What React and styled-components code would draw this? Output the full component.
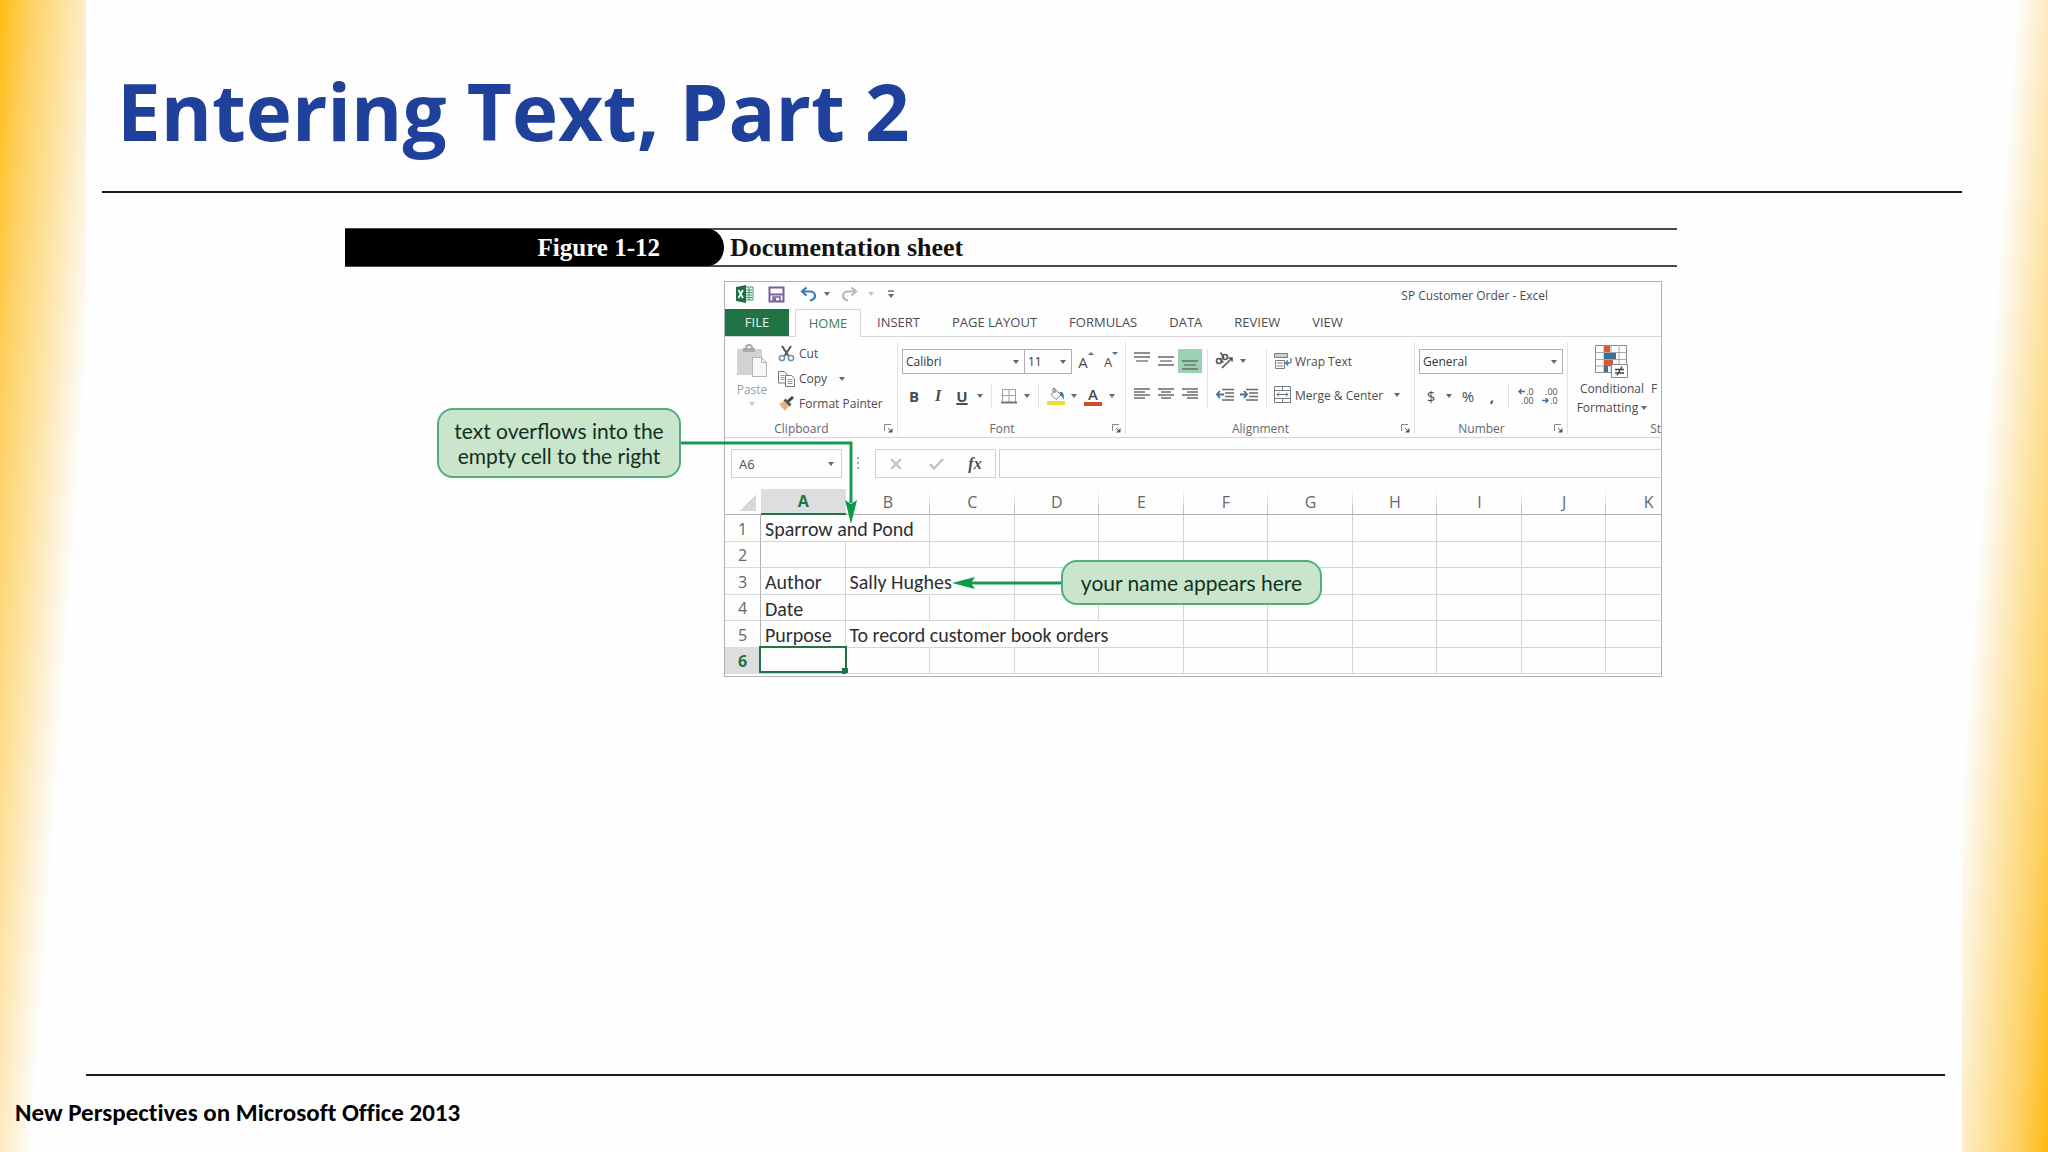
import React, { useState } from "react";
import styled, { createGlobalStyle } from "styled-components";

const GlobalStyle = createGlobalStyle`
  * {
    box-sizing: border-box;
  }
  body {
    margin: 0;
    background: #fefefe;
    font-family: "Open Sans", "Noto Sans", sans-serif;
  }
  button, input, select {
    font: inherit;
    color: inherit;
  }
`;

const Slide = styled.div`
  display: flex;
  flex-direction: column;
  min-height: 100vh;
  background:
    linear-gradient(94deg, #ffbd12 0, #fed062 30px, #fde3a0 65px, #fdefd2 90px, #fefefe 112px) left top / 86px 100% no-repeat,
    linear-gradient(274deg, #ffb910 0, #fed062 30px, #fde3a0 65px, #fdefd2 90px, #fefefe 112px) right top / 86px 100% no-repeat,
    #fefefe;
`;

const Header = styled.header`
  margin: 0 86px 0 102px;
  padding: 58px 0 27px 15px;
  border-bottom: 2px solid #1c1c1c;
`;

const Title = styled.h1`
  margin: 0;
  font-size: 78px;
  line-height: 106px;
  font-weight: 700;
  color: #1f419b;
`;

const Footer = styled.footer`
  margin-top: auto;
  padding-bottom: 24px;
`;

const FooterRule = styled.hr`
  margin: 0 103px 22px 86px;
  border: 0;
  border-top: 2px solid #1c1c1c;
`;

const FooterText = styled.p`
  margin: 0;
  padding-left: 15px;
  font-family: Carlito, Lato, sans-serif;
  font-size: 25px;
  font-variant-ligatures: none;
  line-height: 30px;
  font-weight: 700;
  color: #000;
`;

const Figure = styled.figure`
  margin: 35px 371px 0 345px;
`;

const Caption = styled.figcaption`
  display: flex;
  height: 39px;
  border-top: 2px solid #4a4a4c;
  border-bottom: 2px solid #4a4a4c;
  font-family: "Liberation Serif", serif;
  font-size: 26px;
  line-height: 35px;
  font-weight: 700;
  color: #111;
`;

const CaptionNumber = styled.span`
  flex: none;
  width: 379px;
  margin: -1px 6px -1px 0;
  padding: 1px 64px 0 0;
  border-radius: 0 16px 16px 0 / 0 50% 50% 0;
  background: #000;
  font-size: 25px;
  color: #fff;
  text-align: right;
`;

const Window = styled.div`
  position: relative;
  margin: 14px 15px 0 379px;
  border: 1px solid #b2b2b6;
  background: #fefefe;
  font-size: 12px;
  color: #4c4c50;
`;

const TitleBar = styled.div`
  display: flex;
  align-items: center;
  justify-content: space-between;
  height: 27px;
  padding: 0 113px 0 8px;
`;

const QuickAccess = styled.div`
  display: flex;
  align-items: center;
  align-self: flex-start;
`;

const ToolButton = styled.button`
  display: inline-flex;
  align-items: center;
  justify-content: center;
  flex: none;
  width: ${(props) => props.$width || 24}px;
  height: 24px;
  padding: 0;
  border: 0;
  background: ${(props) => (props.$active ? "#9bd2b4" : "transparent")};
  font-size: 15px;
  line-height: 24px;
  font-weight: ${(props) => (props.$bold ? 700 : 400)};
`;

const Caret = styled.span`
  flex: none;
  border: 3px solid transparent;
  border-top: 4px solid ${(props) => (props.$faint ? "#c4c4c8" : "#66666a")};
  border-bottom: 0;
`;

const Tabs = styled.nav`
  display: flex;
  height: 28px;
  border-bottom: 1px solid #d8d8dc;
  font-size: 13px;
`;

const Tab = styled.button`
  flex: none;
  height: 27px;
  padding: 0 16px;
  border: 0;
  background: transparent;
  line-height: 27px;
`;

const FileTab = styled(Tab)`
  width: 64px;
  margin-right: 6px;
  padding: 0;
  background: #217346;
  color: #e6f3ea;
`;

const HomeTab = styled(Tab)`
  width: 66px;
  height: 28px;
  padding: 0;
  border: 1px solid #d8d8dc;
  border-bottom: 0;
  background: #fefefe;
  color: #3c7d5a;
`;

const Ribbon = styled.div`
  display: flex;
  height: 101px;
  overflow: hidden;
  border-bottom: 1px solid #d4d4d8;
`;

const Group = styled.section`
  display: flex;
  flex-direction: column;
  flex: none;
  width: ${(props) => props.$width}px;
  padding: ${(props) => props.$top || 12}px 4px 0;
  background: linear-gradient(#e2e2e6, #e2e2e6) right 5px / 1px 92px no-repeat;
`;

const GroupFooter = styled.div`
  display: flex;
  align-items: center;
  height: 18px;
  margin-top: auto;
  color: #66666a;
`;

const GroupName = styled.span`
  flex: 1;
  padding-right: 10px;
  text-align: center;
`;

const Launcher = styled.button`
  display: flex;
  width: 10px;
  padding: 0;
  border: 0;
  background: transparent;
`;

const Row = styled.div`
  display: flex;
  align-items: ${(props) => props.$align || "center"};
`;

const Stack = styled.div`
  display: flex;
  flex-direction: column;
  gap: 10px;
`;

const Divider = styled.span`
  align-self: stretch;
  width: 1px;
  margin: 0 5px;
  background: #e2e2e6;
`;

const Field = styled.label`
  display: flex;
  align-items: center;
  flex: none;
  width: ${(props) => props.$width}px;
  height: 25px;
  padding-right: 5px;
  border: 1px solid #b0b0b4;
  & + & {
    border-left: 0;
  }
`;

const Select = styled.select`
  flex: 1;
  min-width: 0;
  height: 22px;
  padding: 0 0 0 3px;
  border: 0;
  outline: 0;
  appearance: none;
  background: transparent;
  color: #333337;
`;

const PasteButton = styled.button`
  display: flex;
  flex-direction: column;
  align-items: center;
  width: 44px;
  padding: 3px 0 0 2px;
  border: 0;
  background: transparent;
  line-height: 24px;
  color: #9c9ca0;
`;

const ClipboardItem = styled.button`
  display: flex;
  align-items: center;
  gap: 4px;
  height: 25px;
  padding: 0 0 0 5px;
  border: 0;
  background: transparent;
`;

const CellButton = styled.button`
  display: flex;
  align-items: center;
  gap: 3px;
  height: 24px;
  padding: 0 0 0 2px;
  border: 0;
  background: transparent;
  white-space: nowrap;
`;

const SpacedCaret = styled(Caret)`
  margin-left: 8px;
`;

const StyleButton = styled.button`
  display: flex;
  flex-direction: column;
  align-items: center;
  flex: none;
  gap: 1px;
  width: 78px;
  padding: 0;
  border: 0;
  background: transparent;
  line-height: 18px;
`;

const CutOffLabel = styled.span`
  padding-top: 35px;
  line-height: 18px;
`;

const CutOffName = styled.span`
  margin-left: auto;
`;

const StylesGroup = styled.section`
  display: flex;
  flex-direction: column;
  flex: 1;
  min-width: 0;
  padding: 8px 0 0 5px;
`;

const FormulaBar = styled.div`
  display: flex;
  height: 51px;
  padding: 11px 0 11px 6px;
`;

const NameBox = styled.label`
  display: flex;
  align-items: center;
  width: 111px;
  padding: 0 7px;
  border: 1px solid #cfcfd3;
`;

const BoxInput = styled.input`
  flex: 1;
  min-width: 0;
  padding: 0;
  border: 0;
  outline: 0;
  background: transparent;
  font-size: 13px;
`;

const Grip = styled.span`
  width: 2px;
  margin: 8px 16px 8px 15px;
  background: repeating-linear-gradient(#a8a8ac 0 2px, transparent 2px 5px);
`;

const EntryButtons = styled.div`
  display: flex;
  align-items: center;
  width: 121px;
  border: 1px solid #cfcfd3;
`;

const FormulaInput = styled.input`
  flex: 1;
  min-width: 0;
  margin-left: 3px;
  border: 1px solid #cfcfd3;
  border-right: 0;
  outline: 0;
  background: transparent;
`;

const SheetClip = styled.div`
  overflow: hidden;
  padding-bottom: 2px;
`;

const Sheet = styled.table`
  width: calc(100% + 30px);
  table-layout: fixed;
  border-collapse: separate;
  border-spacing: 0;
  font-family: Carlito, Lato, sans-serif;
  font-size: 20px;
  line-height: 22px;
`;

const Corner = styled.th`
  width: 36px;
  height: 26px;
  padding: 0;
  border-bottom: 1px solid #b0b0b4;
  background: linear-gradient(135deg, transparent 50%, #d8d8dc 50%) 14px 5px / 17px 17px no-repeat;
`;

const ColumnHead = styled.th`
  height: 26px;
  padding: 0;
  border-bottom: ${(props) => (props.$selected ? "2px solid #217346" : "1px solid #b0b0b4")};
  background: ${(props) =>
    props.$selected
      ? "#dedee0"
      : "linear-gradient(transparent, #b8b8bc) right top / 1px 100% no-repeat"};
  font-family: "Open Sans", sans-serif;
  font-size: 16px;
  font-weight: ${(props) => (props.$selected ? 700 : 400)};
  color: ${(props) => (props.$selected ? "#217346" : "#66666a")};
`;

const SheetRow = styled.tr`
  height: 27px;
  &:nth-child(even) {
    height: 26px;
  }
`;

const RowHead = styled.th`
  padding: 1px 0 0;
  border-right: 1px solid #b0b0b4;
  border-bottom: 1px solid #dcdce0;
  background: ${(props) => (props.$selected ? "#dedee0" : "transparent")};
  font-family: "Open Sans", sans-serif;
  font-size: 16px;
  font-weight: ${(props) => (props.$selected ? 700 : 400)};
  color: ${(props) => (props.$selected ? "#217346" : "#66666a")};
`;

const Cell = styled.td`
  position: relative;
  padding: 2px 0 0 4px;
  border-right: 1px solid ${(props) => (props.$open ? "transparent" : "#d4d4d8")};
  border-bottom: 1px solid #d4d4d8;
  white-space: nowrap;
  color: #2e2e30;
`;

const ActiveFrame = styled.span`
  position: absolute;
  inset: -2px -2px 0 -2px;
  border: 2px solid #217346;
  &::after {
    content: "";
    position: absolute;
    right: -3px;
    bottom: -3px;
    width: 6px;
    height: 6px;
    background: #217346;
  }
`;

const Callout = styled.div`
  position: absolute;
  left: ${(props) => props.$left}px;
  top: ${(props) => props.$top}px;
  width: ${(props) => props.$width}px;
  padding: 8px 0;
  border: 2px solid #4fae7c;
  border-radius: 16px;
  background: #c9e5cb;
  font-family: Lato, sans-serif;
  font-size: 21px;
  line-height: 25px;
  text-align: center;
  white-space: nowrap;
  color: #12301c;
`;

const Arrows = styled.svg`
  position: absolute;
  left: -46px;
  top: 157px;
`;

const NameArrow = styled.svg`
  position: absolute;
  left: 227px;
  top: 294px;
`;

function ExcelLogo() {
  return (
    <svg width="20" height="20" viewBox="0 0 20 20">
      <path d="M10 3h8v13h-8z" fill="#e9f4ed" stroke="#4b9a6c" />
      <path d="M11 6h6M11 8.500h6M11 11h6M11 13.500h6M14 4v12" stroke="#4b9a6c" />
      <path d="M1 3l10-2v18L1 17z" fill="#1e7145" />
      <path d="M3.500 6l4.500 8M8 6l-4.500 8" stroke="#fff" strokeWidth="1.700" />
    </svg>
  );
}

function SaveIcon() {
  return (
    <svg width="17" height="17" viewBox="0 0 17 17" fill="none">
      <path d="M1.500 1.500h14v14h-14z" stroke="#7a5c9c" strokeWidth="2" />
      <path d="M2 8.500h13" stroke="#7a5c9c" strokeWidth="2" />
      <path d="M5 15v-4h7v4" stroke="#7a5c9c" strokeWidth="1.500" />
      <path d="M6 12h2v3H6z" fill="#7a5c9c" />
    </svg>
  );
}

function UndoIcon({ color, flip }) {
  return (
    <svg width="17" height="17" viewBox="0 0 17 17" fill="none" stroke={color} strokeWidth="2.200">
      <g transform={flip ? "matrix(-1 0 0 1 17 0)" : undefined}>
        <path d="M6.500 1.500L2 5.500l4.500 4" />
        <path d="M2 5.500h8c3 0 5 1.800 5 4.300s-2 4.200-5 4.700" />
      </g>
    </svg>
  );
}

function CustomizeIcon() {
  return (
    <svg width="8" height="9" viewBox="0 0 8 9">
      <path d="M1 1h6" stroke="#66666a" strokeWidth="1.400" />
      <path d="M1 4h6L4 8z" fill="#66666a" />
    </svg>
  );
}

function PasteIcon() {
  return (
    <svg width="32" height="34" viewBox="0 0 32 34">
      <path d="M1 5h25v26H1z" fill="#d3d3d6" />
      <path d="M7 4h12v4H7z" fill="#a9a9ad" />
      <path d="M10 4a3 3 0 0 1 6 0" fill="none" stroke="#a9a9ad" strokeWidth="2" />
      <path d="M16.500 13.500h9l5 5v14h-14z" fill="#f7f7f8" stroke="#b4b4b8" />
      <path d="M25.500 13.500v5h5" fill="none" stroke="#b4b4b8" />
    </svg>
  );
}

function CutIcon() {
  return (
    <svg width="17" height="17" viewBox="0 0 17 17" fill="none">
      <path d="M4 1l6.500 10M13 1L6.500 11" stroke="#55555a" strokeWidth="2" />
      <circle cx="4" cy="13" r="2.600" stroke="#6f8fae" strokeWidth="1.500" />
      <circle cx="13" cy="13" r="2.600" stroke="#6f8fae" strokeWidth="1.500" />
    </svg>
  );
}

function CopyIcon() {
  return (
    <svg width="17" height="16" viewBox="0 0 17 16" stroke="#77787e">
      <path d="M.5.500h6l2.500 2.500v9H.5z" fill="#fefefe" />
      <path d="M2.500 4.500h4M2.500 6.500h4M2.500 8.500h4" stroke="#7f9cb8" />
      <path d="M7.500 4.500h6l3 3v8h-9z" fill="#fefefe" />
      <path d="M9.500 8.500h5M9.500 10.500h5M9.500 12.500h5" stroke="#7f9cb8" />
    </svg>
  );
}

function PainterIcon() {
  return (
    <svg width="17" height="16" viewBox="0 0 17 16">
      <path d="M1 8l5-3 5 5-4 5z" fill="#eab676" />
      <path d="M5.500 4.500l2-2 6 6-2 2z" fill="#55555a" />
      <path d="M10 5.500l5-4.500" stroke="#44444a" strokeWidth="3" />
    </svg>
  );
}

function LauncherIcon() {
  return (
    <svg width="9" height="9" viewBox="0 0 9 9">
      <path d="M.5 7V.500H7" fill="none" stroke="#88888c" />
      <path d="M4 4l3 3" stroke="#66666a" />
      <path d="M8.500 4v4.500H4z" fill="#55555a" />
    </svg>
  );
}

function BordersIcon() {
  return (
    <svg width="16" height="16" viewBox="0 0 16 16" fill="none">
      <path d="M1.500 1v13M8 1v13M14.500 1v13M1 1.500h14M1 7.500h14" stroke="#a0a0a4" />
      <path d="M0 14.500h16" stroke="#77777b" strokeWidth="2" />
    </svg>
  );
}

function FillIcon() {
  return (
    <svg width="19" height="19" viewBox="0 0 19 19">
      <path d="M0 14h18v4H0z" fill="#f0dc3c" />
      <path d="M4 7.500l5-4.500 5 5-5 4.500z" fill="#fefefe" stroke="#77777b" />
      <path d="M8 6V1.500h-2V5" fill="none" stroke="#77777b" />
      <path d="M12.500 5c4-1 5 3 4 8-1-3-2-4-3-4.500z" fill="#3f78aa" />
    </svg>
  );
}

const LetterMark = styled.span`
  display: flex;
  flex-direction: column;
  align-items: center;
  width: 18px;
  border-bottom: 4px solid #d24a2c;
  font-size: 15px;
  line-height: 15px;
  font-weight: 600;
`;

const ItalicMark = styled.em`
  font-family: "Liberation Serif", serif;
  font-size: 16px;
  font-weight: 700;
`;

const UnderlineMark = styled.u`
  text-decoration-thickness: 2px;
`;

const SizedLetter = styled.span`
  display: inline-flex;
  align-items: flex-start;
  font-size: ${(props) => props.$size}px;
`;

function SizeArrow({ down }) {
  return (
    <svg width="6" height="14" viewBox="0 0 6 14">
      <path d={down ? "M0 2h6L3 5z" : "M0 5h6L3 2z"} fill="#4f6f8c" />
    </svg>
  );
}

const lineSets = {
  top: ["M0 2h16M0 6h16", "M2 10h12"],
  middle: ["M0 6h16M0 14h16", "M2 10h12"],
  bottom: ["M0 10h16M0 18h16", "M2 14h12"],
  left: ["M0 4h16M0 10h16", "M0 7h11M0 13h11"],
  center: ["M0 4h16M0 10h16", "M3 7h10M3 13h10"],
  right: ["M0 4h16M0 10h16", "M5 7h11M5 13h11"],
};

function LinesIcon({ kind }) {
  return (
    <svg width="16" height="20" viewBox="0 0 16 20" stroke="#6a6a6e" strokeWidth="1.300">
      {lineSets[kind].map((d) => (
        <path key={d} d={d} />
      ))}
    </svg>
  );
}

function OrientationIcon() {
  return (
    <svg width="20" height="20" viewBox="0 0 20 20" fill="none" stroke="#55555a" strokeWidth="1.600">
      <circle cx="4" cy="10" r="2.500" />
      <path d="M4.500 7.500l4 4" />
      <circle cx="10" cy="6" r="2.500" />
      <path d="M5.500 1.500L9 7" />
      <path d="M7 17L17 7M13.500 7h3.500v3.500" />
    </svg>
  );
}

function IndentIcon({ out }) {
  return (
    <svg width="18" height="14" viewBox="0 0 18 14" fill="none">
      <path d="M6 1.500h12M9 5h9M9 8.500h9M6 12h12" stroke="#6a6a6e" strokeWidth="1.300" />
      <path d={out ? "M8 6.500H1M4 3L1 6.500 4 10" : "M0 6.500h7M4 3l3 3.500L4 10"} stroke="#3f6f9c" strokeWidth="1.800" />
    </svg>
  );
}

function WrapIcon() {
  return (
    <svg width="18" height="18" viewBox="0 0 18 18" fill="none">
      <path d="M.5 1.500h13v4H.5z" fill="#c9cfd4" stroke="#7b7b80" />
      <path d="M1.500 8.500h9v8h-9z" stroke="#7b7b80" />
      <path d="M3 11h6M3 14h6" stroke="#7b7b80" />
      <path d="M17 6v3.500c0 1-.5 1.500-1.500 1.500H12M14 8.500L11.500 11l2.500 2.500" stroke="#3f78aa" strokeWidth="1.300" />
    </svg>
  );
}

function MergeIcon() {
  return (
    <svg width="18" height="18" viewBox="0 0 18 18" fill="none" stroke="#7b7b80">
      <path d="M.5.500h16v16H.5zM.5 4.500h16M.5 12.500h16M8.500.500v4M8.500 12.500v4" />
      <path d="M3 8.500h11M5 6.500l-2 2 2 2M12 6.500l2 2-2 2" stroke="#4f6f8c" />
    </svg>
  );
}

const DecimalBox = styled.span`
  display: flex;
  flex-direction: column;
  align-items: flex-end;
  font-size: 9px;
  line-height: 9px;
`;

const DecimalLine = styled.span`
  display: flex;
  align-items: center;
`;

function DecimalArrow({ out }) {
  return (
    <svg width="8" height="7" viewBox="0 0 8 7" fill="none" stroke="#3f6f9c" strokeWidth="1.400">
      <path d={out ? "M7 3.500H1M3.500 1L1 3.500 3.500 6" : "M0 3.500h6M3.500 1L6 3.500 3.500 6"} />
    </svg>
  );
}

function ConditionalIcon() {
  return (
    <svg width="34" height="34" viewBox="0 0 34 34">
      <path d="M.5.500h31v27H.5z" fill="#fefefe" stroke="#8a8a8e" />
      <path d="M.5 7.500h31M.5 14.500h31M.5 21h31M9 0v27M16 0v27M24 0v27" stroke="#a8a8ac" />
      <path d="M9 1h6v6H9zM9 15h9v6H9z" fill="#d65a37" />
      <path d="M9 8h12v6H9zM9 21h4v6H9z" fill="#3a6f98" />
      <path d="M16.500 19.500h16v13h-16z" fill="#fefefe" stroke="#8a8a8e" />
      <path d="M20 24.500h9M20 28h9M27 21.500l-5 9" stroke="#44444a" strokeWidth="1.400" />
    </svg>
  );
}

const columns = ["A", "B", "C", "D", "E", "F", "G", "H", "I", "J", "K"];

const rows = [
  { number: 1, cells: { A: "Sparrow and Pond" }, open: ["A"] },
  { number: 2, cells: {}, open: [] },
  { number: 3, cells: { A: "Author", B: "Sally Hughes" }, open: ["B"] },
  { number: 4, cells: { A: "Date" }, open: [] },
  { number: 5, cells: { A: "Purpose", B: "To record customer book orders" }, open: ["B", "C", "D"] },
  { number: 6, cells: {}, open: [] },
];

const tabs = ["INSERT", "PAGE LAYOUT", "FORMULAS", "DATA", "REVIEW", "VIEW"];

function GroupLabel({ name }) {
  return (
    <GroupFooter>
      <GroupName>{name}</GroupName>
      <Launcher aria-label={name + " settings"}>
        <LauncherIcon />
      </Launcher>
    </GroupFooter>
  );
}

function DropButton({ label, faint }) {
  return (
    <ToolButton $width={12} aria-label={label}>
      <Caret $faint={faint} />
    </ToolButton>
  );
}

function ClipboardGroup() {
  return (
    <Group $width={173} $top={4}>
      <Row $align="flex-start">
        <PasteButton>
          <PasteIcon />
          Paste
          <Caret $faint />
        </PasteButton>
        <div>
          <ClipboardItem>
            <CutIcon />
            Cut
          </ClipboardItem>
          <ClipboardItem>
            <CopyIcon />
            Copy
            <SpacedCaret />
          </ClipboardItem>
          <ClipboardItem>
            <PainterIcon />
            Format Painter
          </ClipboardItem>
        </div>
      </Row>
      <GroupLabel name="Clipboard" />
    </Group>
  );
}

function FontGroup() {
  return (
    <Group $width={228}>
      <Stack>
        <Row>
          <Field $width={123}>
            <Select aria-label="Font name">
              <option>Calibri</option>
            </Select>
            <Caret />
          </Field>
          <Field $width={47}>
            <Select aria-label="Font size">
              <option>11</option>
            </Select>
            <Caret />
          </Field>
          <ToolButton aria-label="Increase font size" $width={28}>
            <SizedLetter $size={15}>
              A<SizeArrow />
            </SizedLetter>
          </ToolButton>
          <ToolButton aria-label="Decrease font size" $width={22}>
            <SizedLetter $size={13}>
              A<SizeArrow down />
            </SizedLetter>
          </ToolButton>
        </Row>
        <Row>
          <ToolButton $bold>B</ToolButton>
          <ToolButton>
            <ItalicMark>I</ItalicMark>
          </ToolButton>
          <ToolButton $bold>
            <UnderlineMark>U</UnderlineMark>
          </ToolButton>
          <DropButton label="Underline styles" />
          <Divider />
          <ToolButton aria-label="Borders">
            <BordersIcon />
          </ToolButton>
          <DropButton label="Border styles" />
          <Divider />
          <ToolButton aria-label="Fill color">
            <FillIcon />
          </ToolButton>
          <DropButton label="Fill colors" />
          <ToolButton aria-label="Font color" $width={26}>
            <LetterMark>A</LetterMark>
          </ToolButton>
          <DropButton label="Font colors" />
        </Row>
      </Stack>
      <GroupLabel name="Font" />
    </Group>
  );
}

function AlignmentGroup() {
  return (
    <Group $width={289}>
      <Row>
        <Stack>
          <Row>
            <ToolButton aria-label="Top align">
              <LinesIcon kind="top" />
            </ToolButton>
            <ToolButton aria-label="Middle align">
              <LinesIcon kind="middle" />
            </ToolButton>
            <ToolButton aria-label="Bottom align" $active>
              <LinesIcon kind="bottom" />
            </ToolButton>
          </Row>
          <Row>
            <ToolButton aria-label="Align left">
              <LinesIcon kind="left" />
            </ToolButton>
            <ToolButton aria-label="Center">
              <LinesIcon kind="center" />
            </ToolButton>
            <ToolButton aria-label="Align right">
              <LinesIcon kind="right" />
            </ToolButton>
          </Row>
        </Stack>
        <Divider />
        <Stack>
          <Row>
            <ToolButton aria-label="Orientation">
              <OrientationIcon />
            </ToolButton>
            <DropButton label="Orientation options" />
          </Row>
          <Row>
            <ToolButton aria-label="Decrease indent">
              <IndentIcon out />
            </ToolButton>
            <ToolButton aria-label="Increase indent">
              <IndentIcon />
            </ToolButton>
          </Row>
        </Stack>
        <Divider />
        <Stack>
          <CellButton>
            <WrapIcon />
            Wrap Text
          </CellButton>
          <CellButton>
            <MergeIcon />
            Merge &amp; Center
            <SpacedCaret />
          </CellButton>
        </Stack>
      </Row>
      <GroupLabel name="Alignment" />
    </Group>
  );
}

function NumberGroup() {
  return (
    <Group $width={153}>
      <Stack>
        <Field $width={144}>
          <Select aria-label="Number format">
            <option>General</option>
          </Select>
          <Caret />
        </Field>
        <Row>
          <ToolButton>$</ToolButton>
          <DropButton label="Currencies" />
          <ToolButton $width={26}>%</ToolButton>
          <ToolButton $bold $width={22}>,</ToolButton>
          <Divider />
          <ToolButton>
            <DecimalBox>
              <DecimalLine>
                <DecimalArrow out />
                .0
              </DecimalLine>
              <DecimalLine>.00</DecimalLine>
            </DecimalBox>
          </ToolButton>
          <ToolButton>
            <DecimalBox>
              <DecimalLine>.00</DecimalLine>
              <DecimalLine>
                <DecimalArrow />
                .0
              </DecimalLine>
            </DecimalBox>
          </ToolButton>
        </Row>
      </Stack>
      <GroupLabel name="Number" />
    </Group>
  );
}

function SpreadsheetWindow() {
  const [formula, setFormula] = useState("");
  const [cellName, setCellName] = useState("A6");

  return (
    <Window>
      <TitleBar>
        <QuickAccess>
          <ToolButton aria-label="Excel">
            <ExcelLogo />
          </ToolButton>
          <ToolButton aria-label="Save" $width={38}>
            <SaveIcon />
          </ToolButton>
          <ToolButton aria-label="Undo" $width={26}>
            <UndoIcon color="#3f78b4" />
          </ToolButton>
          <DropButton label="Undo history" />
          <ToolButton aria-label="Redo" $width={32}>
            <UndoIcon color="#b8b8bc" flip />
          </ToolButton>
          <DropButton label="Redo history" faint />
          <ToolButton aria-label="Customize toolbar" $width={28}>
            <CustomizeIcon />
          </ToolButton>
        </QuickAccess>
        <span>SP Customer Order - Excel</span>
      </TitleBar>
      <Tabs>
        <FileTab>FILE</FileTab>
        <HomeTab>HOME</HomeTab>
        {tabs.map((tab) => (
          <Tab key={tab}>{tab}</Tab>
        ))}
      </Tabs>
      <Ribbon>
        <ClipboardGroup />
        <FontGroup />
        <AlignmentGroup />
        <NumberGroup />
        <StylesGroup>
          <Row $align="flex-start">
            <StyleButton>
              <ConditionalIcon />
              <span>Conditional</span>
              <Row as="span">
                Formatting&nbsp;
                <Caret />
              </Row>
            </StyleButton>
            <CutOffLabel>F</CutOffLabel>
          </Row>
          <GroupFooter>
            <CutOffName>St</CutOffName>
          </GroupFooter>
        </StylesGroup>
      </Ribbon>
      <FormulaBar>
        <NameBox>
          <BoxInput
            aria-label="Name box"
            value={cellName}
            onChange={(event) => setCellName(event.target.value)}
          />
          <Caret />
        </NameBox>
        <Grip />
        <EntryButtons>
          <ToolButton aria-label="Cancel" $width={40}>
            <svg width="12" height="12" viewBox="0 0 12 12" stroke="#c0c0c4" strokeWidth="2">
              <path d="M1 1l10 10M11 1L1 11" />
            </svg>
          </ToolButton>
          <ToolButton aria-label="Enter" $width={40}>
            <svg width="15" height="12" viewBox="0 0 15 12" fill="none" stroke="#c0c0c4" strokeWidth="2.400">
              <path d="M1 6l4 4.500L14 1" />
            </svg>
          </ToolButton>
          <ToolButton aria-label="Insert function" $width={38}>
            <ItalicMark>fx</ItalicMark>
          </ToolButton>
        </EntryButtons>
        <FormulaInput
          aria-label="Formula"
          value={formula}
          onChange={(event) => setFormula(event.target.value)}
        />
      </FormulaBar>
      <SheetClip>
        <Sheet>
          <thead>
            <tr>
              <Corner />
              {columns.map((column) => (
                <ColumnHead key={column} $selected={column === "A"}>
                  {column}
                </ColumnHead>
              ))}
            </tr>
          </thead>
          <tbody>
            {rows.map((row) => (
              <SheetRow key={row.number}>
                <RowHead $selected={row.number === 6}>{row.number}</RowHead>
                {columns.map((column) => (
                  <Cell key={column} $open={row.open.includes(column)}>
                    {row.cells[column]}
                    {row.number === 6 && column === "A" && <ActiveFrame />}
                  </Cell>
                ))}
              </SheetRow>
            ))}
          </tbody>
        </Sheet>
      </SheetClip>
      <Arrows width="300" height="160" viewBox="0 0 300 160">
        <path d="M0 4h172v60" fill="none" stroke="#169c50" strokeWidth="3" />
        <path d="M172 85l-6-24 6 4 6-4z" fill="#0c9a46" />
      </Arrows>
      <NameArrow width="110" height="14" viewBox="0 0 110 14">
        <path d="M16 7h94" stroke="#169c50" strokeWidth="3" />
        <path d="M0 7l23-6-4 6 4 6z" fill="#0c9a46" />
      </NameArrow>
      <Callout $left={-288} $top={126} $width={244}>
        text overflows into the
        <br />
        empty cell to the right
      </Callout>
      <Callout $left={336} $top={278} $width={261}>
        your name appears here
      </Callout>
    </Window>
  );
}

export default function App() {
  return (
    <Slide>
      <GlobalStyle />
      <Header>
        <Title>Entering Text, Part 2</Title>
      </Header>
      <Figure>
        <Caption>
          <CaptionNumber>Figure 1-12</CaptionNumber>
          Documentation sheet
        </Caption>
        <SpreadsheetWindow />
      </Figure>
      <Footer>
        <FooterRule />
        <FooterText>New Perspectives on Microsoft Office 2013</FooterText>
      </Footer>
    </Slide>
  );
}
